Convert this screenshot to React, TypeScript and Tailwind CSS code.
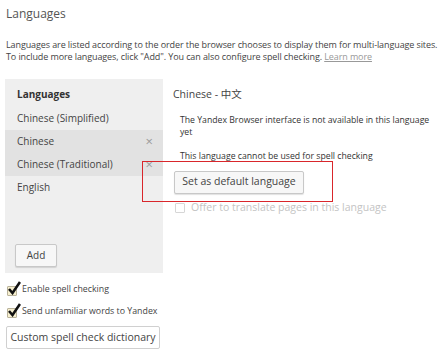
const font = { fontFamily: '"Open Sans", "Noto Sans CJK SC", sans-serif' };

function Check({ checked, disabled }: { checked?: boolean; disabled?: boolean }) {
  return (
    <span className="relative inline-block w-[11px] h-[11px] shrink-0">
      <span
        className={
          "absolute left-0 bottom-0 w-[10px] h-[10px] border rounded-[1px] " +
          (disabled ? "border-[#d6d6d6] bg-white" : "border-[#b9b29a] bg-[#f6efcf]")
        }
      />
      {checked && (
        <svg className="absolute left-[1px] bottom-[1px]" width="13" height="14" viewBox="0 0 13 14">
          <path d="M1 8 L4.5 12 L12 1" fill="none" stroke="#111" strokeWidth="2.6" strokeLinejoin="miter" />
        </svg>
      )}
    </span>
  );
}

function Row({ label, remove }: { label: string; remove?: boolean }) {
  return (
    <div className="flex items-center justify-between h-[23px] pl-[12px] pr-[10px]">
      <span className="text-[10px] text-[#444]">{label}</span>
      {remove && <span className="text-[13px] leading-none text-[#9a9a9a]">×</span>}
    </div>
  );
}

export default function App() {
  return (
    <div style={font} className="w-[441px] h-[355px] bg-white relative overflow-hidden text-[#333]">
      <div className="pl-[6px] pt-[6px]">
        <h1 className="text-[12px] text-[#555] leading-[16px]">Languages</h1>
        <p className="mt-[17px] text-[9px] leading-[12px] text-[#444] tracking-[-0.1px]">
          Languages are listed according to the order the browser chooses to display them for multi-language sites.
          <br />
          To include more languages, click "Add". You can also configure spell checking.{" "}
          <span className="text-[#999] underline">Learn more</span>
        </p>
      </div>

      <div className="flex mt-[16px] pl-[5px]">
        <div className="w-[158px] h-[194px] bg-[#efefef] flex flex-col">
          <div className="h-[23px] flex items-end pl-[12px] text-[10px] font-bold text-[#333]">Languages</div>
          <div className="h-[5px]" />
          <Row label="Chinese (Simplified)" />
          <div className="bg-[#e2e2e2]">
            <Row label="Chinese" remove />
            <Row label="Chinese (Traditional)" remove />
          </div>
          <Row label="English" />
          <div className="flex-1" />
          <div className="pl-[10px] pb-[6px]">
            <button className="w-[42px] h-[23px] bg-[#f7f7f7] border border-[#c8c8c8] rounded-[2px] text-[10px] text-[#444] shadow-[0_1px_1px_rgba(0,0,0,0.12)]">
              Add
            </button>
          </div>
        </div>

        <div className="pl-[10px] pt-[8px]">
          <div className="text-[10.5px] text-[#444]">Chinese - 中文</div>
          <p className="mt-[11px] pl-[7px] w-[262px] text-[8.7px] leading-[12px] text-[#333]">
            The Yandex Browser interface is not available in this language yet
          </p>
          <p className="mt-[12px] pl-[7px] text-[8.7px] leading-[12px] text-[#333]">This language cannot be used for spell checking</p>
          <div className="mt-[3px] relative">
            <div className="absolute left-[-31px] top-[-4px] w-[191px] h-[41px] border border-[#d9262b] pointer-events-none" />
            <button className="ml-[1px] mt-[6px] w-[130px] h-[23px] bg-[#f7f7f7] border border-[#c8c8c8] rounded-[2px] text-[10.5px] text-[#444] shadow-[0_1px_1px_rgba(0,0,0,0.12)]">
              Set as default language
            </button>
          </div>
          <label className="flex items-center gap-[5px] mt-[6px] pl-[2px] text-[10.5px] text-[#c4c4c4]">
            <Check disabled />
            Offer to translate pages in this language
          </label>
        </div>
      </div>

      <div className="pl-[7px] mt-[9px] flex flex-col">
        <label className="flex items-end gap-[4px] h-[14px] text-[8.8px] text-[#444]">
          <Check checked />
          Enable spell checking
        </label>
        <label className="flex items-end gap-[4px] h-[14px] mt-[8px] text-[8.8px] text-[#444]">
          <Check checked />
          Send unfamiliar words to Yandex
        </label>
        <button className="mt-[8px] self-start ml-[-1px] w-[154px] h-[23px] bg-white border border-[#d0d0d0] rounded-[2px] text-[10.5px] text-[#444]">
          Custom spell check dictionary
        </button>
      </div>
    </div>
  );
}
